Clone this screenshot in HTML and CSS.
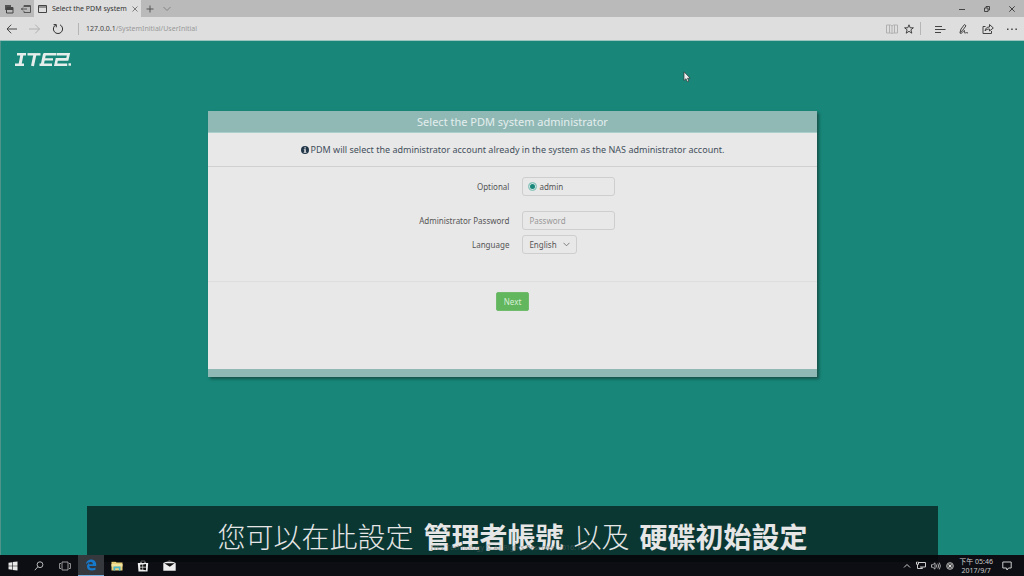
FILE: index.html
```html
<!DOCTYPE html>
<html lang="en">
<head>
<meta charset="utf-8">
<title>Select the PDM system</title>
<link rel="stylesheet" href="styles.css">
</head>
<body>
<header class="browser">
  <div class="tabs">
    <button class="icon-btn tab-tool" aria-label="Tabs you've set aside"><svg width="10" height="10" viewBox="0 0 10 10"><path d="M1 1h6v5H1z" fill="#555"/><path d="M2.500 3.500h6.500v5.500H2.500z" fill="#bababa" stroke="#444"/><path d="M2.500 4h6.500v2H2.500z" fill="#444"/></svg></button>
    <button class="icon-btn tab-tool" aria-label="Set these tabs aside"><svg width="10" height="10" viewBox="0 0 10 10" fill="none" stroke="#555"><path d="M3 3V1.500h6.500v7H3V7M3 2.500h6M0 5h6M2 3.500L.5 5 2 6.500"/></svg></button>
    <div class="tab">
      <svg width="9" height="8" viewBox="0 0 9 8" fill="none" stroke="#444"><path d="M.5.5h8v7h-8zM.5 2h8"/></svg>
      <span class="tab-title">Select the PDM system</span>
      <button class="icon-btn" aria-label="Close tab"><svg width="6" height="6" viewBox="0 0 6 6" stroke="#666" stroke-width=".8"><path d="M.5.5l5 5M5.500.5l-5 5"/></svg></button>
    </div>
    <button class="icon-btn new-tab" aria-label="New tab"><svg width="8" height="8" viewBox="0 0 8 8" stroke="#555"><path d="M4 .5v7M.5 4h7"/></svg></button>
    <button class="icon-btn" aria-label="Show tab previews"><svg width="8" height="6" viewBox="0 0 8 6" fill="none" stroke="#777" stroke-width=".8"><path d="M.5 1l3.500 3.500L7.500 1"/></svg></button>
    <div class="window-btns">
      <button class="icon-btn" aria-label="Minimize"><svg width="6" height="6" viewBox="0 0 6 6" stroke="#444"><path d="M0 3.500h6"/></svg></button>
      <button class="icon-btn" aria-label="Restore"><svg width="6" height="6" viewBox="0 0 6 6" fill="none" stroke="#444"><path d="M.5 2h3.500v3.500H.5zM2 2V.5h3.500V4H4"/></svg></button>
      <button class="icon-btn" aria-label="Close"><svg width="6" height="6" viewBox="0 0 6 6" stroke="#333" stroke-width=".9"><path d="M.3.3l5.400 5.400M5.700.3L.3 5.700"/></svg></button>
    </div>
  </div>
  <nav class="toolbar">
    <button class="icon-btn nav-btn" aria-label="Back"><svg width="12" height="10" viewBox="0 0 12 10" fill="none" stroke="#444"><path d="M11 5H1M5.200.7L1 5l4.200 4.300"/></svg></button>
    <button class="icon-btn nav-btn" aria-label="Forward"><svg width="12" height="10" viewBox="0 0 12 10" fill="none" stroke="#b0b0b0"><path d="M0 5h10.500M6.300.7L10.500 5 6.300 9.300"/></svg></button>
    <button class="icon-btn nav-btn" aria-label="Refresh"><svg width="12" height="12" viewBox="0 0 12 12" fill="none" stroke="#333"><path d="M4 1.800a4.600 4.600 0 1 0 4 0M4.300 4.300V1.600H1.600"/></svg></button>
    <div class="address"><span class="host">127.0.0.1</span>/SystemInitial/UserInitial</div>
    <button class="icon-btn" aria-label="Reading view"><svg width="12" height="10" viewBox="0 0 12 10" fill="none" stroke="#b0b0b0"><path d="M.5 1h4l1.500 1 1.500-1h4v8h-4L6 9.500 4.500 9h-4zM6 2v7M3.500 1v8M8.500 1v8"/></svg></button>
    <button class="icon-btn star" aria-label="Add to favorites"><svg width="10" height="10" viewBox="0 0 10 10" fill="none" stroke="#333" stroke-width=".9"><path d="M5 .8l1.200 3h3.200L6.900 5.800l.9 3.400L5 7.300 2.200 9.200l.9-3.400L.6 3.800h3.200z"/></svg></button>
    <div class="tools">
      <button class="icon-btn" aria-label="Hub"><svg width="12" height="8" viewBox="0 0 12 8" stroke="#444"><path d="M1 1.500h7M1 4.500h10.500M1 7.500h6"/></svg></button>
      <button class="icon-btn" aria-label="Make a web note"><svg width="12" height="12" viewBox="0 0 12 12" fill="none" stroke="#444"><path d="M2 9.500L3 6 6.500 1.500 8 2.800 4.500 7.500 2 9.500c-.5 1 1 1.300 2 .3s2-2.800 2.500-2.300-.8 2.500.3 2.500 1.200-.8 3.200 0"/></svg></button>
      <button class="icon-btn" aria-label="Share"><svg width="12" height="12" viewBox="0 0 12 12" fill="none" stroke="#444"><path d="M3.500 3.500H1v7h8.500V8M3 8c.5-3 2-4 4.500-4V1.500L11.300 5 7.500 8V6C5.500 6 4.300 6.500 3 8z"/></svg></button>
      <button class="icon-btn" aria-label="More"><svg width="12" height="4" viewBox="0 0 12 4" fill="#444"><path d="M1 1.500h1.500V3H1zM5.200 1.500h1.500V3H5.200zM9.400 1.500h1.500V3H9.400z"/></svg></button>
    </div>
  </nav>
</header>

<main class="page">
  <svg class="logo" width="58" height="16" viewBox="0 0 58 16" role="img" aria-label="ITE2" fill="none" stroke="#e6eeec" stroke-width="3">
    <path d="M3 2.300h9M1 12.700h9" stroke-width="2.400"/><path d="M8 2L6 13"/>
    <path d="M13.500 2.300h13" stroke-width="2.400"/><path d="M21 2l-2.500 12"/>
    <path d="M42 2.300H29.500M28.500 7.400h10.500M38 12.700H25.500" stroke-width="2.400"/><path d="M30.500 2l-2.300 11"/>
    <path d="M42.500 2.300h12l-1.200 5.100H42.800l-1.200 5.300h11.600" stroke-width="2.600"/>
    <path d="M54.500 12.500h2.500" stroke-width="2.400"/>
  </svg>
  <form class="card">
    <h1 class="card-title">Select the PDM system administrator</h1>
    <p class="notice"><svg width="8" height="8" viewBox="0 0 8 8"><circle cx="4" cy="4" r="4" fill="#22384a"/><path d="M3.400 1.200h1.400v1.200H3.400zM2.800 3.200h2v2.700h.6v.8H2.700v-.8h.6V4h-.5z" fill="#e8e8e8"/></svg> PDM will select the administrator account already in the system as the NAS administrator account.</p>
    <div class="fields">
      <span class="label" id="optional">Optional</span>
      <div class="field choice" role="radiogroup" aria-labelledby="optional">
        <input class="radio" type="radio" id="admin" name="account" checked><label for="admin">admin</label>
      </div>
      <label class="label spaced" for="password">Administrator Password</label>
      <input class="field spaced" type="password" id="password" placeholder="Password">
      <label class="label" for="language">Language</label>
      <div class="select-wrap">
        <select class="field select" id="language"><option>English</option></select>
        <svg class="chevron" width="7" height="5" viewBox="0 0 7 5" fill="none" stroke="#666" stroke-width=".8"><path d="M.5.8l3 3 3-3"/></svg>
      </div>
    </div>
    <div class="actions"><button class="next" type="button">Next</button></div>
    <div class="card-foot"></div>
  </form>
  <svg class="cursor" width="8" height="12" viewBox="0 0 8 12"><path d="M1 .8v8.700l2-1.800 1.300 3 1.500-.6-1.300-2.900h2.700z" fill="#eee" stroke="#333" stroke-width=".7"/></svg>
</main>

<p class="caption"><span>您可以在此設定</span><strong>管理者帳號</strong><span>以及</span><strong>硬碟初始設定</strong></p>
<p class="copyright">ITE2 Technology © All Rights Reserved 2016. PDM</p>

<footer class="taskbar">
  <button class="task" aria-label="Start"><svg width="10" height="10" viewBox="0 0 10 10" fill="#e8e8e8"><path d="M.5 1.700l3.700-.5v3.500H.5zM4.800 1.100L9.500.5v4.200H4.800zM.5 5.300h3.700v3.500l-3.700-.5zM4.800 5.300h4.700v4.200l-4.700-.6z"/></svg></button>
  <button class="task" aria-label="Search"><svg width="10" height="10" viewBox="0 0 10 10" fill="none" stroke="#ccc" stroke-width=".9"><circle cx="6" cy="3.700" r="2.900"/><path d="M3.900 5.800L.8 9.200"/></svg></button>
  <button class="task" aria-label="Task view"><svg width="12" height="10" viewBox="0 0 12 10" fill="none" stroke="#aaa" stroke-width=".9"><path d="M3 1h6v8H3zM2 2.500H.6v5H2M10 2.500h1.400v5H10"/></svg></button>
  <button class="task active" aria-label="Edge"><svg width="12" height="12" viewBox="0 0 12 12" fill="#1679cc"><path d="M.8 5.500C1.200 2.300 3.500.6 6.200.6c3 0 5 2.200 5 5v1.300H4.200c.1 1.700 1.500 2.400 3.200 2.400 1.200 0 2.200-.3 3.100-.8v2.300c-1 .5-2.200.8-3.600.8C3.800 11.600 2 10 2 7.600c0-1.900 1-3.300 2.700-4.100-.5.500-.7 1.100-.8 1.700h4c0-1.400-.7-2.200-2.200-2.200C3.700 3 2 4 .8 5.500z"/></svg></button>
  <button class="task" aria-label="File Explorer"><svg width="12" height="10" viewBox="0 0 12 10"><path d="M.5.500h4l1 1h6v8H.5z" fill="#e8cf78"/><path d="M.5 3h11v2.500H.5z" fill="#f2e2a0"/><path d="M2.500 5.500h7v4H7.800V7.300H4.200v2.200H2.500z" fill="#4ab4c8"/></svg></button>
  <button class="task" aria-label="Store"><svg width="12" height="12" viewBox="0 0 12 12"><path d="M4 3V1h4v2" fill="none" stroke="#ddd"/><path d="M.8 3h10.400l-.7 8.500h-9z" fill="#eee"/><path d="M3.200 4.800l2.300-.3v2.300H3.200zM6.100 4.400L9 4v2.800H6.100zM3.200 7.400h2.300v2.300l-2.300-.3zM6.100 7.400H9v2.800l-2.900-.4z" fill="#111"/></svg></button>
  <button class="task" aria-label="Mail"><svg width="13" height="11" viewBox="0 0 13 11"><path d="M.3 3L6.500.3 12.700 3v7.700H.3z" fill="#eee"/><path d="M1.300 3.300h10.400L6.800 6.800z" fill="#111"/></svg></button>
  <div class="tray">
    <svg width="8" height="6" viewBox="0 0 8 6" fill="none" stroke="#ccc"><path d="M1 4.500l3-3 3 3"/></svg>
    <svg width="10" height="9" viewBox="0 0 10 9" fill="none" stroke="#ccc"><path d="M3 1.500h6.500v4.500H4M.5.800h2v2.500h-2zM1.500 3.500v4h5M6 6v2"/></svg>
    <svg width="10" height="8" viewBox="0 0 10 8" fill="none" stroke="#ccc" stroke-width=".8"><path d="M.5 2.700h1.400L4 .8v6.400L1.900 5.300H.5zM5.300 2.500q1 1.500 0 3M6.800 1.500q1.700 2.500 0 5M8.300.6q2.200 3.400 0 6.800"/></svg>
    <svg width="8" height="8" viewBox="0 0 8 8"><circle cx="4" cy="4" r="3.400" fill="#555" stroke="#bbb" stroke-width=".8"/><path d="M2.500 2.500l3 3M5.500 2.500l-3 3" stroke="#ddd"/></svg>
    <div class="clock"><span>下午 05:46</span><span>2017/9/7</span></div>
    <svg width="10" height="10" viewBox="0 0 10 10" fill="none" stroke="#ccc"><path d="M.8 1h8.400v6H6.500L5 9 4.500 7H.8z"/></svg>
  </div>
</footer>
</body>
</html>
```
FILE: styles.css
```css
* { box-sizing: border-box; }
body {
  margin: 0;
  min-height: 100vh;
  display: flex;
  flex-direction: column;
  position: relative;
  background: #18877a;
  font: 8px/12px "Noto Sans", "Open Sans", "Noto Sans CJK TC", sans-serif;
  color: #555;
}
svg { display: block; flex: none; }
p, h1 { margin: 0; }
button, input, select { font: inherit; color: inherit; }
.icon-btn { display: flex; padding: 0; border: 0; background: none; }

.tabs { display: flex; align-items: center; height: 17px; background: #bababa; }
.tab-tool { width: 17px; justify-content: center; }
.tab { display: flex; align-items: center; gap: 5px; width: 107px; height: 17px; padding: 0 6px 0 4px; background: #dedede; color: #333; }
.tab-title { flex: 1; white-space: nowrap; font-size: 7px; }
.new-tab { margin: 0 9px 0 5px; }
.window-btns { display: flex; gap: 19px; margin-left: auto; padding-right: 9px; }

.toolbar { display: flex; align-items: center; height: 24px; padding: 0 6px; background: #dedede; border-bottom: 1px solid #9cc4be; }
.nav-btn { margin-right: 11px; }
.address { flex: 1; margin-left: 3px; padding-left: 7px; border-left: 1px solid #b5b5b5; color: #999; font-size: 7px; }
.host { color: #444; }
.star { margin: 0 6px; }
.tools { display: flex; align-items: center; gap: 12px; padding-left: 13px; height: 13px; border-left: 1px solid #b5b5b5; }

.page { flex: 1; position: relative; padding: 11px 13px; border-left: 1px solid #4f938a; }
.card { width: 61%; min-width: 420px; margin: 43px auto 0; background: #e8e8e8; box-shadow: 2px 2px 3px #174f49; }
.card-title { height: 22px; background: #90b9b6; border-bottom: 1px solid #a9d0cb; color: #e4eeed; font-weight: 400; font-size: 11px; line-height: 22px; text-align: center; }
.notice { display: flex; align-items: center; justify-content: center; gap: 2px; height: 34px; border-bottom: 1px solid #d0d0d0; color: #44505c; font-size: 9px; }
.fields { display: grid; grid-template-columns: 301px 1fr; column-gap: 13px; row-gap: 5px; align-items: center; padding: 10px 0 27px; border-bottom: 1px solid #dedede; }
.label { text-align: right; }
.spaced { margin-top: 10px; }
.field { width: 93px; height: 19px; padding: 0 6px; border: 1px solid #cecece; border-radius: 3px; background: transparent; outline: 0; }
.field::placeholder { color: #999; opacity: 1; }
.choice { display: flex; align-items: center; gap: 2px; padding: 0 5px; }
.radio { appearance: none; width: 9px; height: 9px; margin: 0; border: 1px solid #9ccfc9; border-radius: 50%; background: #18877a; box-shadow: inset 0 0 0 1px #d5e5e3; }
.select-wrap { position: relative; width: 55px; }
.select { appearance: none; width: 100%; display: block; }
.chevron { position: absolute; right: 7px; top: 7px; pointer-events: none; }
.actions { padding: 10px 0 58px; text-align: center; }
.next { height: 19px; padding: 0 7px; border: 1px solid #70bb6c; border-radius: 2px; background: #62b65e; color: #d8eed6; vertical-align: top; }
.card-foot { height: 8px; background: #90b9b6; }
.cursor { position: absolute; left: 682px; top: 30px; }

.caption { position: absolute; left: 87px; right: 86px; bottom: 14px; height: 56px; display: flex; justify-content: center; gap: 10px; padding-top: 10px; background: rgba(4, 8, 10, .63); color: #e6e6e6; font: 300 28px/40px "Noto Sans CJK TC", sans-serif; white-space: nowrap; z-index: 1; }
.caption strong { font-weight: 700; }
.copyright { position: absolute; left: 0; right: 0; bottom: 22px; z-index: 2; text-align: center; font-size: 7px; color: rgba(90, 100, 98, .6); }

.taskbar { display: flex; height: 21px; background: #0d0e13; }
.task { width: 26px; display: flex; align-items: center; justify-content: center; padding: 0; border: 0; background: none; }
.active { position: relative; background: #35383d; border-bottom: 1px solid #76b0e0; z-index: 2; }
.tray { display: flex; align-items: center; gap: 5px; margin-left: auto; padding-right: 12px; color: #ccc; }
.clock { display: flex; flex-direction: column; align-items: center; font-size: 7px; line-height: 9px; margin-right: 4px; }
```
